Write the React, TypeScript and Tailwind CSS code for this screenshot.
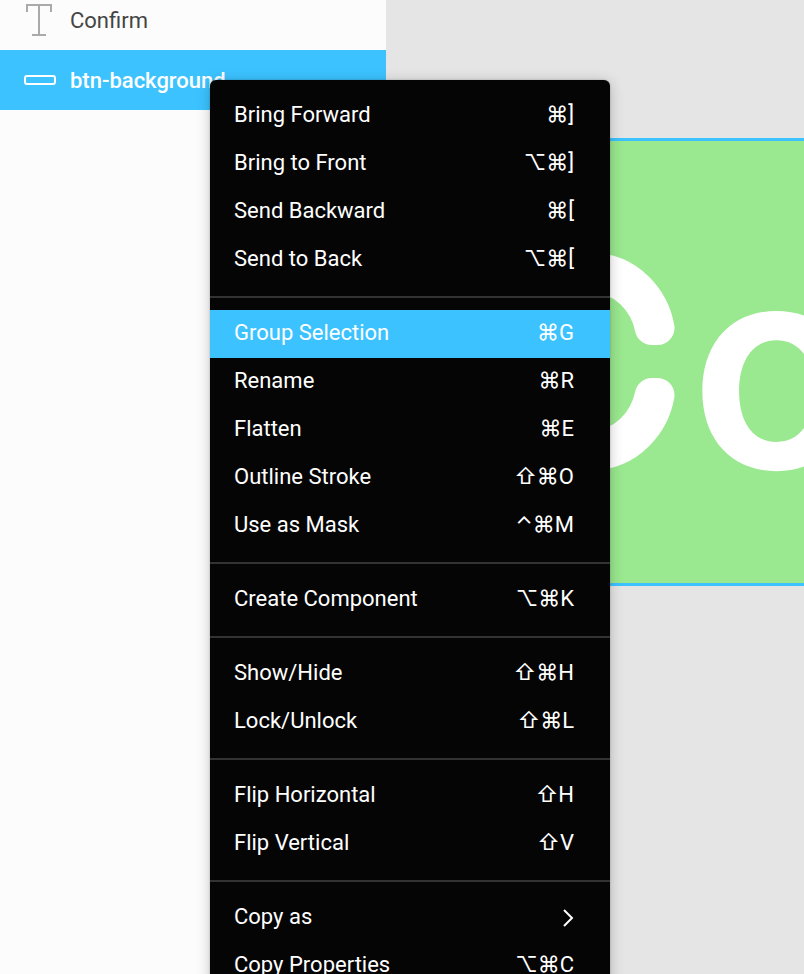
type Item = { label: string; shortcut?: string; submenu?: boolean };

const groups: Item[][] = [
  [
    { label: "Bring Forward", shortcut: "⌘]" },
    { label: "Bring to Front", shortcut: "⌥⌘]" },
    { label: "Send Backward", shortcut: "⌘[" },
    { label: "Send to Back", shortcut: "⌥⌘[" },
  ],
  [
    { label: "Group Selection", shortcut: "⌘G" },
    { label: "Rename", shortcut: "⌘R" },
    { label: "Flatten", shortcut: "⌘E" },
    { label: "Outline Stroke", shortcut: "⇧⌘O" },
    { label: "Use as Mask", shortcut: "⌃⌘M" },
  ],
  [{ label: "Create Component", shortcut: "⌥⌘K" }],
  [
    { label: "Show/Hide", shortcut: "⇧⌘H" },
    { label: "Lock/Unlock", shortcut: "⇧⌘L" },
  ],
  [
    { label: "Flip Horizontal", shortcut: "⇧H" },
    { label: "Flip Vertical", shortcut: "⇧V" },
  ],
  [
    { label: "Copy as", submenu: true },
    { label: "Copy Properties", shortcut: "⌥⌘C" },
  ],
];

function MenuItem({ item }: { item: Item }) {
  const active = item.label === "Group Selection";
  return (
    <button
      type="button"
      role="menuitem"
      className={`flex h-12 w-full items-center justify-between pr-9 pb-0.5 pl-6 text-left ${active ? "bg-[#3cc3ff]" : ""}`}
    >
      <span>{item.label}</span>
      {item.submenu ? (
        <svg width="12" height="20" viewBox="0 0 12 20" fill="none" stroke="currentColor" strokeWidth="2" className="mt-0.5" aria-hidden="true">
          <path d="M2 2l8 8-8 8" />
        </svg>
      ) : (
        <span className="font-['Roboto','Inter',sans-serif]">{item.shortcut}</span>
      )}
    </button>
  );
}

function ContextMenu() {
  return (
    <div
      role="menu"
      className="absolute top-20 left-[210px] w-[400px] rounded-md bg-[#050505] py-3 text-[22px] leading-7 text-white shadow-[0_2px_14px_rgba(0,0,0,0.22),0_0_2px_rgba(0,0,0,0.25)]"
    >
      {groups.map((group, i) => (
        <div key={group[0].label}>
          {i > 0 && <hr className="my-3 h-0.5 border-0 bg-[#333333]" />}
          {group.map((item) => (
            <MenuItem key={item.label} item={item} />
          ))}
        </div>
      ))}
    </div>
  );
}

function LayersPanel() {
  return (
    <aside className="w-[386px] shrink-0 bg-[#fcfcfc] text-[22px] leading-7">
      <button type="button" className="-mt-2.5 flex h-[60px] w-full items-center pl-6 text-left text-[#444444]">
        <svg width="32" height="32" viewBox="0 0 32 32" fill="none" stroke="#aaaaaa" strokeWidth="2" className="mr-3.5 shrink-0" aria-hidden="true">
          <path d="M3 8V1h24v7M15 1v30M8 31h14" />
        </svg>
        <span className="pt-0.5">Confirm</span>
      </button>
      <button type="button" className="flex h-[60px] w-full items-center bg-[#3cc3ff] pl-6 text-left font-medium text-white">
        <svg width="32" height="10" viewBox="0 0 32 10" fill="none" stroke="currentColor" strokeWidth="2" className="mr-3.5 shrink-0" aria-hidden="true">
          <rect x="1" y="1" width="30" height="8" rx="2" />
        </svg>
        <span className="pt-0.5">btn-background</span>
      </button>
    </aside>
  );
}

function Canvas() {
  return (
    <main className="min-w-0 flex-1 overflow-hidden bg-[#e5e5e5] pt-[138px]">
      <div className="h-[448px] border-y-[3px] border-[#3cc3ff] bg-[#9ae88f]">
        <svg width="100%" height="442" className="block overflow-hidden" role="img" aria-label="Confirm">
          <g fill="#ffffff" stroke="#ffffff" strokeLinejoin="round" fontFamily="Inter, sans-serif">
            <text x="111" y="310" fontWeight="100" fontSize="246" strokeWidth="34">C</text>
            <text x="304" y="327" fontWeight="600" fontSize="284" strokeWidth="0">onfirm</text>
          </g>
        </svg>
      </div>
    </main>
  );
}

export default function App() {
  return (
    <div className="relative flex h-screen overflow-hidden font-['Roboto',sans-serif]">
      <LayersPanel />
      <Canvas />
      <ContextMenu />
    </div>
  );
}
